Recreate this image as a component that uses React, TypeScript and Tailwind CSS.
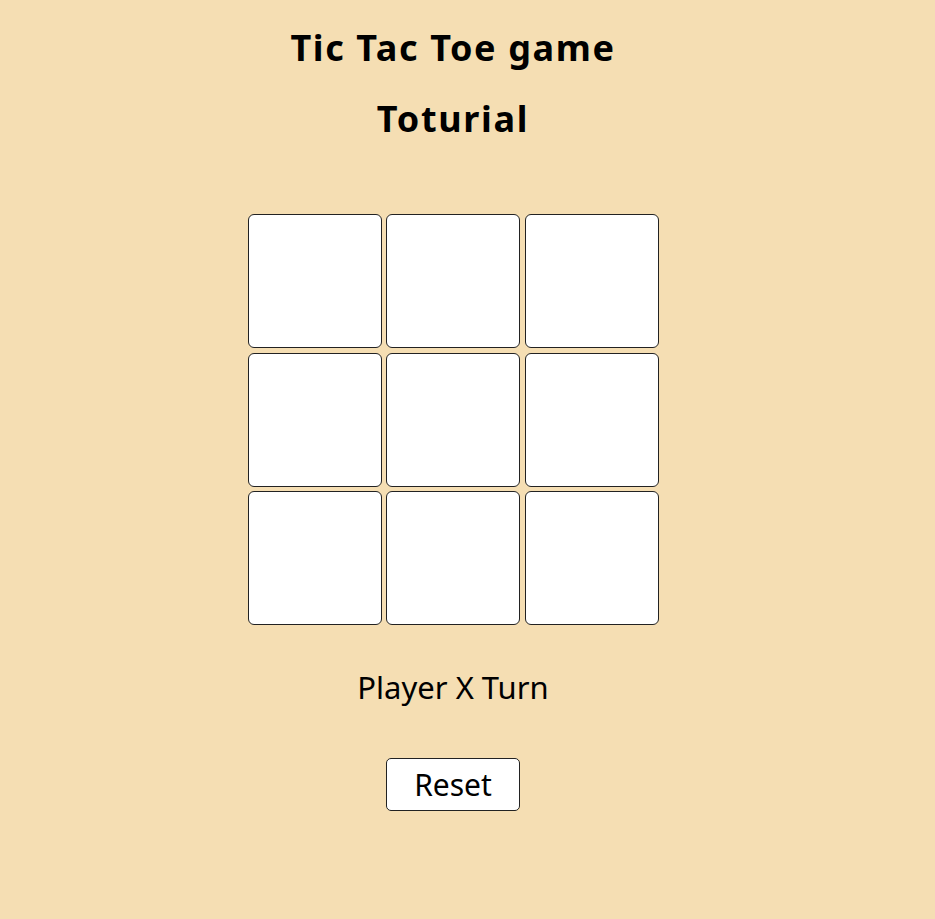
import { useState } from "react";

type Cell = "X" | "O" | null;

export default function App() {
  const [cells, setCells] = useState<Cell[]>(Array(9).fill(null));
  const [player, setPlayer] = useState<"X" | "O">("X");

  const play = (i: number) => {
    if (cells[i]) return;
    const next = [...cells];
    next[i] = player;
    setCells(next);
    setPlayer(player === "X" ? "O" : "X");
  };

  const reset = () => {
    setCells(Array(9).fill(null));
    setPlayer("X");
  };

  return (
    <div className="min-h-[919px] w-full bg-[#f5deb3] font-['Noto_Sans',sans-serif] text-black">
      <div className="flex w-[906px] flex-col items-center">
        <h1 className="mt-[24px] text-[36px] leading-[48px] font-bold tracking-[1.6px]">Tic Tac Toe game</h1>
        <h2 className="mt-[23px] text-[36px] leading-[48px] font-bold tracking-[1.7px]">Toturial</h2>

        <div className="mt-[71px] grid grid-cols-[repeat(3,134px)] gap-[4.5px]">
          {cells.map((c, i) => (
            <button
              key={i}
              onClick={() => play(i)}
              className="h-[134px] w-[134px] rounded-[6px] border border-[#222] bg-white text-[60px] font-bold"
            >
              {c}
            </button>
          ))}
        </div>

        <p className="mt-[42px] text-[31px] leading-[40px]">Player {player} Turn</p>

        <button
          onClick={reset}
          className="mt-[51px] h-[53px] w-[134px] rounded-[5px] border border-[#222] bg-white text-[30px] leading-[40px]"
        >
          Reset
        </button>
      </div>
    </div>
  );
}
